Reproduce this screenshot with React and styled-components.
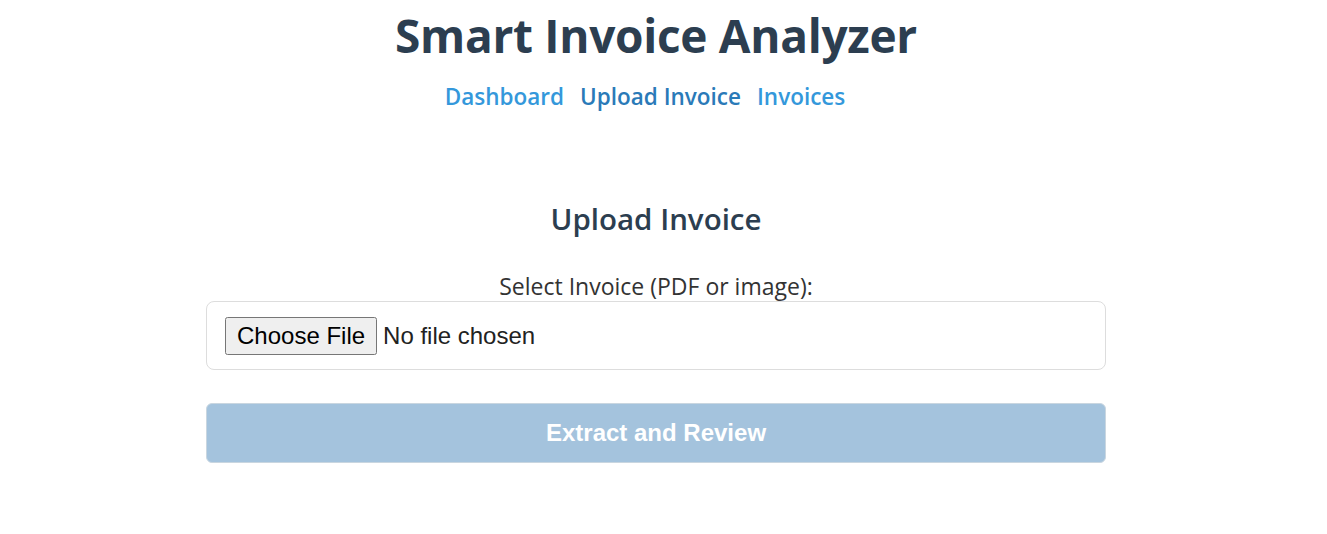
import React, { useState } from "react";
import styled, { createGlobalStyle } from "styled-components";

const GlobalStyle = createGlobalStyle`
  body {
    margin: 0;
    background: #ffffff;
    font-family: "Open Sans", "Noto Sans", sans-serif;
  }
`;

const Page = styled.div`
  padding-right: 15px;
  display: flex;
  flex-direction: column;
  align-items: center;
`;

const Header = styled.header`
  display: flex;
  flex-direction: column;
  align-items: center;
  padding-top: 6px;
`;

const Title = styled.h1`
  margin: 0;
  font-size: 46px;
  line-height: 58px;
  font-weight: 700;
  color: #2c3e50;
  letter-spacing: -0.3px;
`;

const Nav = styled.nav`
  display: flex;
  gap: 16px;
  margin-top: 18px;
  padding-right: 22px;
`;

const NavLink = styled.a`
  font-size: 22.5px;
  line-height: 30px;
  font-weight: 600;
  text-decoration: none;
  color: ${(p) => (p.$active ? "#2a7ab8" : "#3498db")};
  cursor: pointer;
`;

const Main = styled.main`
  width: 900px;
  margin-top: 87px;
  display: flex;
  flex-direction: column;
  align-items: center;
`;

const Heading = styled.h2`
  margin: 0;
  font-size: 29.5px;
  line-height: 40px;
  font-weight: 600;
  color: #2c3e50;
`;

const Form = styled.form`
  width: 100%;
  margin-top: 32px;
  display: flex;
  flex-direction: column;
  align-items: center;
`;

const Label = styled.label`
  font-size: 23px;
  line-height: 30px;
  color: #333333;
`;

const FileBox = styled.div`
  box-sizing: border-box;
  width: 100%;
  height: 69px;
  padding: 0 18px;
  display: flex;
  align-items: center;
  border: 1px solid #dddddd;
  border-radius: 8px;
`;

const FileInput = styled.input`
  font-family: "Liberation Sans", Arial, sans-serif;
  font-size: 24px;
  color: #222222;

  &::file-selector-button {
    font: inherit;
    color: #000000;
    padding: 3px 10px;
    margin-right: 6px;
  }
`;

const SubmitButton = styled.button`
  box-sizing: border-box;
  width: 100%;
  height: 60px;
  margin-top: 33px;
  border: 1px solid #c9d6e0;
  border-radius: 6px;
  background: #a4c3dd;
  color: #ffffff;
  font-family: "Liberation Sans", Arial, sans-serif;
  font-size: 24px;
  font-weight: 700;
  cursor: not-allowed;
`;

export default function App() {
  const [file, setFile] = useState(null);

  return (
    <>
      <GlobalStyle />
      <Page>
        <Header>
          <Title>Smart Invoice Analyzer</Title>
          <Nav>
            <NavLink>Dashboard</NavLink>
            <NavLink $active>Upload Invoice</NavLink>
            <NavLink>Invoices</NavLink>
          </Nav>
        </Header>
        <Main>
          <Heading>Upload Invoice</Heading>
          <Form onSubmit={(e) => e.preventDefault()}>
            <Label htmlFor="invoice">Select Invoice (PDF or image):</Label>
            <FileBox>
              <FileInput
                id="invoice"
                type="file"
                accept="application/pdf,image/*"
                onChange={(e) => setFile(e.target.files[0] || null)}
              />
            </FileBox>
            <SubmitButton type="submit" disabled={!file}>
              Extract and Review
            </SubmitButton>
          </Form>
        </Main>
      </Page>
    </>
  );
}
